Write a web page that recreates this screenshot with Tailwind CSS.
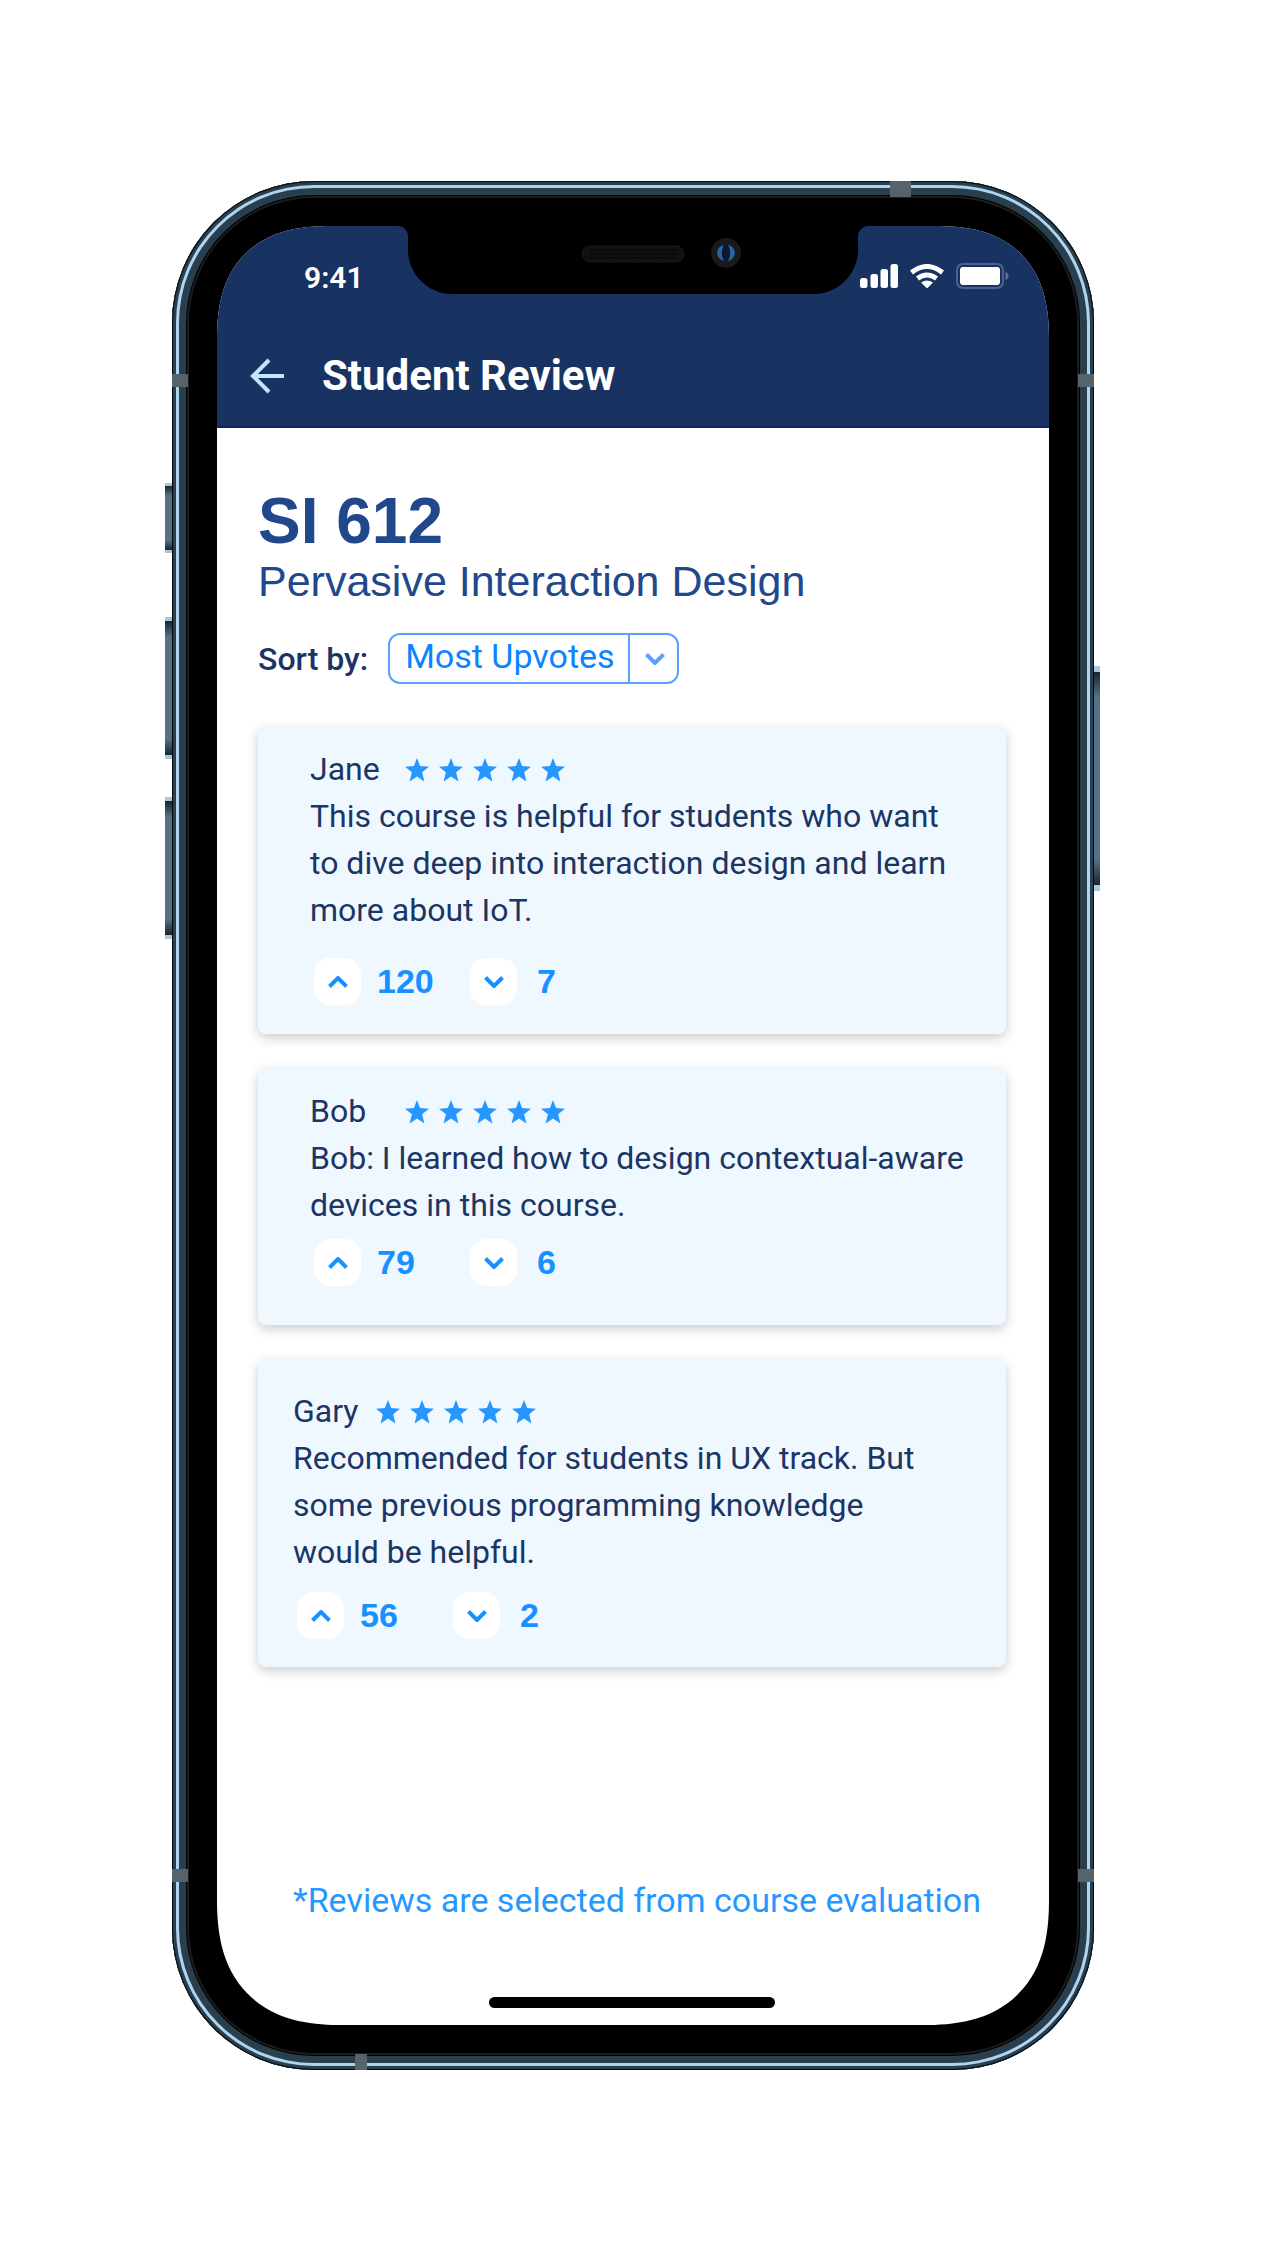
<!DOCTYPE html>
<html lang="en">
<head>
<meta charset="utf-8">
<meta name="viewport" content="width=device-width, initial-scale=1">
<title>Student Review</title>
<script src="https://cdn.jsdelivr.net/npm/@tailwindcss/browser@4"></script>
</head>
<body class="bg-white pt-[181px] pb-[180px] font-[Roboto,sans-serif]">
<svg class="hidden" aria-hidden="true">
  <symbol id="star" viewBox="0 0 24 24"><path d="M12 0l3.1 8.1 8.9.6-6.9 5.500 2.300 9.300L12 18.400l-7.400 5.100 2.300-9.300L0 8.700l8.900-.6z"/></symbol>
  <symbol id="up" viewBox="0 0 20 12"><path d="M1.500 10.500L10 2l8.500 8.500" fill="none" stroke="currentColor" stroke-width="4"/></symbol>
  <symbol id="down" viewBox="0 0 20 12"><path d="M1.500 1.500L10 10l8.500-8.500" fill="none" stroke="currentColor" stroke-width="4"/></symbol>
</svg>

<div class="relative mx-auto w-full max-w-[922px]">
  <!-- Side keys -->
  <span class="absolute -left-[7px] top-[302px] h-[70px] w-2 border-y-3 border-[#a9c9d8] bg-[linear-gradient(#152630,#567186_15%,#567186_85%,#152630)]"></span>
  <span class="absolute -left-[7px] top-[436px] h-[142px] w-2 border-y-4 border-[#a9c9d8] bg-[linear-gradient(#152630,#567186_12%,#567186_88%,#152630)]"></span>
  <span class="absolute -left-[7px] top-[616px] h-[142px] w-2 border-y-4 border-[#a9c9d8] bg-[linear-gradient(#152630,#567186_12%,#567186_88%,#152630)]"></span>
  <span class="absolute -right-[6px] top-[485px] h-[225px] w-2 border-y-6 border-[#a9c9d8] bg-[linear-gradient(#152630,#567186_12%,#567186_88%,#152630)]"></span>

  <!-- Metal frame and bezel -->
  <div class="relative rounded-[142px] bg-black p-[45px] shadow-[inset_0_0_0_1px_#05090c,inset_0_0_0_4px_#2a3f4e,inset_0_0_0_7px_#aed4f0,inset_0_0_0_14px_#2a3f4e,inset_0_0_0_15px_#000,inset_0_0_0_17px_#1c1c1c]">
    <!-- Antenna bands -->
    <span class="absolute right-[183px] top-0 h-4 w-[21px] bg-[#56636a]"></span>
    <span class="absolute bottom-0 left-[183px] h-4 w-3 bg-[#56636a]"></span>
    <span class="absolute left-0 top-[193px] h-[13px] w-4 bg-[#56636a]"></span>
    <span class="absolute right-0 top-[193px] h-[13px] w-4 bg-[#56636a]"></span>
    <span class="absolute bottom-[188px] left-0 h-[13px] w-4 bg-[#56636a]"></span>
    <span class="absolute bottom-[188px] right-0 h-[13px] w-4 bg-[#56636a]"></span>

    <div class="relative overflow-hidden rounded-t-[114px] rounded-b-[126px] bg-white [corner-shape:superellipse(1.3)]">
      <!-- Notch -->
      <svg class="absolute left-1/2 top-0 w-[470px] -translate-x-1/2" viewBox="0 0 470 68" aria-hidden="true">
        <path d="M0 0c6 0 10 5 10 11v13c0 24 20 44 44 44h362c24 0 44-20 44-44V11c0-6 4-11 10-11z" fill="#000"/>
        <rect x="184" y="20" width="102" height="16" rx="8" fill="#101010" stroke="#1b1b1b"/>
        <path d="M192 24h86M192 28h86M192 32h86" stroke="#000" stroke-dasharray="2 1"/>
        <circle cx="328" cy="27" r="15" fill="#1a1a1c"/>
        <circle cx="328" cy="27" r="8" fill="#0b1830"/>
        <path d="M326 19c-9 2-9 14 0 16-3-5-3-11 0-16zM330 19c9 2 9 14 0 16 3-5 3-11 0-16z" fill="#2766a8"/>
      </svg>

      <header class="border-b-2 border-[#0c2861] bg-[#183362] text-white">
        <div class="flex items-center justify-between pl-[87px] pr-[39px] pt-8">
          <time class="text-[30px] font-semibold leading-10">9:41</time>
          <div class="flex items-center gap-3 pb-1">
            <svg class="h-6 w-[38px]" viewBox="0 0 38 24" fill="#fff" aria-label="Signal"><rect y="14" width="7.500" height="10" rx="2.500"/><rect x="10.500" y="10" width="7.500" height="14" rx="2.500"/><rect x="20.500" y="5" width="7.500" height="19" rx="2.500"/><rect x="30.500" width="7.500" height="24" rx="2.500"/></svg>
            <svg class="h-6 w-[34px]" viewBox="0 0 34 24" fill="none" stroke="#fff" stroke-width="5" aria-label="Wi-Fi"><path d="M1.500 8.500Q17-3.500 32.500 8.500M7.500 14.500Q17 7.500 26.500 14.500"/><path d="M11 18.500Q17 14.500 23 18.500L17 24.500z" fill="#fff" stroke="none"/></svg>
            <svg class="h-[26px] w-[54px]" viewBox="0 0 54 26" aria-label="Battery"><rect x="1" y="1" width="46" height="24" rx="6" fill="none" stroke="#4d628e" stroke-width="2"/><rect x="4" y="4" width="40" height="18" rx="3" fill="#fff"/><path d="M49.500 9c4 2 4 6 0 8z" fill="#60739a"/></svg>
          </div>
        </div>
        <div class="flex items-center gap-[37px] pb-[26px] pl-8 pt-[54px]">
          <button type="button" aria-label="Back" class="text-[#c3e5ff]"><svg class="h-9 w-9" viewBox="0 0 36 36" fill="none" stroke="currentColor" stroke-width="4"><path d="M35 18H4M20 2L4 18l16 16"/></svg></button>
          <h1 class="text-[42px] font-bold leading-12">Student Review</h1>
        </div>
      </header>

      <main class="pb-[17px] pl-[41px] pr-[43px] pt-[57px]">
        <div class="font-['Liberation_Sans',sans-serif] text-[#22488c]">
          <h2 class="text-[64px] font-bold leading-[72px]">SI 612</h2>
          <p class="text-[43px] leading-12">Pervasive Interaction Design</p>
        </div>

        <div class="mt-7 flex items-center gap-5 text-[#1a3564]">
          <label for="sort" class="text-[32px] font-medium leading-12">Sort by:</label>
          <div class="relative">
            <select id="sort" class="h-[51px] w-[291px] appearance-none rounded-xl border-2 border-[#5c9ffc] bg-white pb-1 pl-[15px] text-[34px] leading-[43px] text-[#0c84ff]"><option>Most Upvotes</option></select>
            <span class="pointer-events-none absolute inset-y-0 right-0 flex w-[51px] items-center justify-center border-l-2 border-[#5c9ffc] text-[#5c9ffc]"><svg class="h-3 w-5"><use href="#down"/></svg></span>
          </div>
        </div>

        <section class="mt-[42px] flex flex-col gap-[34px] text-[32px] leading-[47px] text-[#1b3564]">
          <article class="rounded-lg bg-[#f0f8ff] pb-[29px] pl-[52px] pr-11 pt-5 shadow-[0_4px_12px_rgba(0,0,0,0.2)]">
            <div class="flex items-center">
              <h3 class="w-[95px]">Jane</h3>
              <div role="img" aria-label="5 out of 5 stars" class="flex gap-[10px] fill-[#2597ff]"><svg class="size-6"><use href="#star"/></svg><svg class="size-6"><use href="#star"/></svg><svg class="size-6"><use href="#star"/></svg><svg class="size-6"><use href="#star"/></svg><svg class="size-6"><use href="#star"/></svg></div>
            </div>
            <p>This course is helpful for students who want to dive deep into interaction design and learn more about IoT.</p>
            <div class="mt-6 flex items-center pl-1 font-['Liberation_Sans',sans-serif] text-[34px] font-bold text-[#1990ff]">
              <button type="button" aria-label="Upvote" class="grid size-[47px] place-items-center rounded-2xl bg-white"><svg class="h-3 w-5"><use href="#up"/></svg></button>
              <span class="ml-4 w-[93px]">120</span>
              <button type="button" aria-label="Downvote" class="grid size-[47px] place-items-center rounded-2xl bg-white"><svg class="h-3 w-5"><use href="#down"/></svg></button>
              <span class="ml-5">7</span>
            </div>
          </article>

          <article class="rounded-lg bg-[#f0f8ff] pb-[39px] pl-[52px] pr-8 pt-5 shadow-[0_4px_12px_rgba(0,0,0,0.2)]">
            <div class="flex items-center">
              <h3 class="w-[95px]">Bob</h3>
              <div role="img" aria-label="5 out of 5 stars" class="flex gap-[10px] fill-[#2597ff]"><svg class="size-6"><use href="#star"/></svg><svg class="size-6"><use href="#star"/></svg><svg class="size-6"><use href="#star"/></svg><svg class="size-6"><use href="#star"/></svg><svg class="size-6"><use href="#star"/></svg></div>
            </div>
            <p>Bob: I learned how to design contextual-aware devices in this course.</p>
            <div class="mt-[10px] flex items-center pl-1 font-['Liberation_Sans',sans-serif] text-[34px] font-bold text-[#1990ff]">
              <button type="button" aria-label="Upvote" class="grid size-[47px] place-items-center rounded-2xl bg-white"><svg class="h-3 w-5"><use href="#up"/></svg></button>
              <span class="ml-4 w-[93px]">79</span>
              <button type="button" aria-label="Downvote" class="grid size-[47px] place-items-center rounded-2xl bg-white"><svg class="h-3 w-5"><use href="#down"/></svg></button>
              <span class="ml-5">6</span>
            </div>
          </article>

          <article class="rounded-lg bg-[#f0f8ff] pb-7 pl-[35px] pr-[80px] pt-[29px] shadow-[0_4px_12px_rgba(0,0,0,0.2)]">
            <div class="flex items-center">
              <h3 class="w-[83px]">Gary</h3>
              <div role="img" aria-label="5 out of 5 stars" class="flex gap-[10px] fill-[#2597ff]"><svg class="size-6"><use href="#star"/></svg><svg class="size-6"><use href="#star"/></svg><svg class="size-6"><use href="#star"/></svg><svg class="size-6"><use href="#star"/></svg><svg class="size-6"><use href="#star"/></svg></div>
            </div>
            <p>Recommended for students in UX track. But some previous programming knowledge would be helpful.</p>
            <div class="mt-4 flex items-center pl-1 font-['Liberation_Sans',sans-serif] text-[34px] font-bold text-[#1990ff]">
              <button type="button" aria-label="Upvote" class="grid size-[47px] place-items-center rounded-2xl bg-white"><svg class="h-3 w-5"><use href="#up"/></svg></button>
              <span class="ml-4 w-[93px]">56</span>
              <button type="button" aria-label="Downvote" class="grid size-[47px] place-items-center rounded-2xl bg-white"><svg class="h-3 w-5"><use href="#down"/></svg></button>
              <span class="ml-5">2</span>
            </div>
          </article>
        </section>

        <p class="mt-[210px] pl-[35px] text-[34px] leading-[47px] text-[#2597ff]">*Reviews are selected from course evaluation</p>
        <div class="mx-auto mt-[73px] h-[11px] w-[286px] rounded-full bg-black"></div>
      </main>
    </div>
  </div>
</div>
</body>
</html>
